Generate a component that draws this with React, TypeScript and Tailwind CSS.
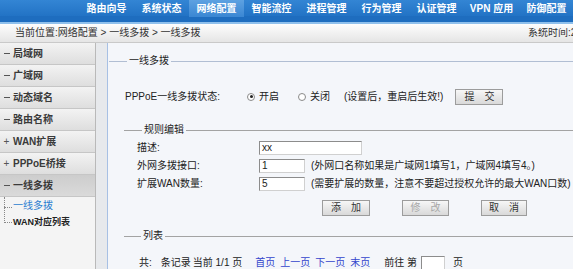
import React from 'react';

const nav = ['路由向导', '系统状态', '网络配置', '智能流控', '进程管理', '行为管理', '认证管理', 'VPN 应用', '防御配置'];

const menu = [
  { sign: '-', label: '局域网' },
  { sign: '-', label: '广域网' },
  { sign: '-', label: '动态域名' },
  { sign: '-', label: '路由名称' },
  { sign: '+', label: 'WAN扩展' },
  { sign: '+', label: 'PPPoE桥接' },
  { sign: '-', label: '一线多拨', active: true },
];

function Legend({ title, indent, lead, color }: { title: string; indent: number; lead: number; color: string }) {
  return (
    <div className="flex items-center h-[12px]" style={{ marginLeft: indent }}>
      <div className="h-px" style={{ width: lead, background: color }} />
      <span className="px-[2px] text-[#222]">{title}</span>
      <div className="h-px flex-1" style={{ background: color }} />
    </div>
  );
}

function Btn({ children, disabled }: { children: React.ReactNode; disabled?: boolean }) {
  return (
    <button
      className={`h-[16px] border border-[#9c9c9c] bg-gradient-to-b from-[#f7f7f7] to-[#d9d9d9] text-[10px] leading-none ${
        disabled ? 'text-[#a8a8a8]' : 'text-[#333]'
      }`}
    >
      {children}
    </button>
  );
}

function Radio({ checked, label }: { checked?: boolean; label: string }) {
  return (
    <span className="flex items-center">
      <span className="w-[8px] h-[8px] rounded-full border border-[#8a8a8a] bg-white flex items-center justify-center">
        {checked && <span className="w-[3px] h-[3px] rounded-full bg-[#222]" />}
      </span>
      <span className="ml-[4px]">{label}</span>
    </span>
  );
}

function Input({ value, w }: { value: string; w: number }) {
  return (
    <div
      className="h-[14px] border border-[#8c8c8c] border-r-[#d0d0d0] border-b-[#d0d0d0] bg-white pl-[2px] leading-[12px] text-[10px]"
      style={{ width: w }}
    >
      {value}
    </div>
  );
}

export default function App() {
  return (
    <div className="w-full h-[269px] overflow-hidden bg-[#f4f6fa] text-[10px] text-[#222] font-['Liberation_Sans','Noto_Sans_CJK_SC',sans-serif] leading-none">
      {/* top nav */}
      <div className="h-[16px] bg-gradient-to-b from-[#3385d4] to-[#2273c5] flex pl-[79px]">
        {nav.map((n, i) => (
          <div
            key={n}
            className={`w-[55px] shrink-0 h-[17px] flex items-center justify-center font-bold text-white ${
              i === 2 ? 'bg-gradient-to-b from-[#5da1e1] to-[#3a87d3]' : ''
            }`}
          >
            {n}
          </div>
        ))}
      </div>
      <div className="h-[6px] bg-[#1e6dbf]" />
      <div className="h-[2px] bg-[#8fc0ec]" />

      {/* breadcrumb */}
      <div className="h-[19px] flex items-center bg-gradient-to-b from-[#fdfdfd] to-[#e5e5e5] border-b border-[#c9c9c9]">
        <div className="flex-1 pl-[15px] text-[#333]">当前位置:网络配置 &gt; 一线多拨 &gt; 一线多拨</div>
        <div className="w-[45px] overflow-hidden whitespace-nowrap text-[#333]">系统时间:2013-08-12</div>
      </div>

      <div className="flex h-[226px]">
        {/* sidebar */}
        <div className="w-[96px] shrink-0 bg-[#f4f4f4] border-r border-[#b9b9b9] flex flex-col">
          {menu.map((m) => (
            <div
              key={m.label}
              className={`h-[22px] shrink-0 flex items-center border-b border-[#c6c6c6] font-bold text-[#3a3a3a] ${
                m.active ? 'bg-gradient-to-b from-[#cdcdcd] to-[#dadada]' : 'bg-gradient-to-b from-[#f3f3f3] to-[#dedede]'
              }`}
            >
              <span className="w-[13px] flex items-center justify-center text-[#555] font-normal">
                {m.sign === '-' ? <span className="block w-[6px] h-px bg-[#555]" /> : '+'}
              </span>
              <span>{m.label}</span>
            </div>
          ))}
          <div className="relative pl-[13px] pt-[4px] flex flex-col gap-[7px]">
            <div className="absolute left-[4px] top-0 h-[26px] border-l border-dotted border-[#888]" />
            <div className="absolute left-[4px] top-[10px] w-[8px] border-t border-dotted border-[#888]" />
            <div className="absolute left-[4px] top-[25px] w-[8px] border-t border-dotted border-[#888]" />
            <span className="text-[#2b7dd0]">一线多拨</span>
            <span className="text-[#222] font-bold text-[9px]">WAN对应列表</span>
          </div>
        </div>
        <div className="w-[12px] shrink-0 bg-[#e7e9ec] border-r border-[#a7c0e4]" />

        {/* main */}
        <div className="flex-1 pl-[1px] pt-[12px]">
          <Legend title="一线多拨" indent={0} lead={18} color="#b1bed3" />

          <div className="mt-[21px] h-[17px] flex items-center pl-[16px]">
            <span className="w-[122px]">PPPoE一线多拨状态:</span>
            <Radio checked label="开启" />
            <span className="ml-[19px]">
              <Radio label="关闭" />
            </span>
            <span className="ml-[14px]">(设置后，重启后生效!)</span>
            <span className="ml-[12px]">
              <Btn>
                <span className="px-[8px]">提　交</span>
              </Btn>
            </span>
          </div>

          <div className="mt-[19px]">
            <Legend title="规则编辑" indent={15} lead={18} color="#a3a3a3" />
          </div>

          <div className="mt-[3px] pl-[28px] flex flex-col">
            <div className="h-[18px] flex items-center">
              <span className="w-[122px]">描述:</span>
              <Input value="xx" w={103} />
            </div>
            <div className="h-[18px] flex items-center">
              <span className="w-[122px]">外网多拨接口:</span>
              <Input value="1" w={46} />
              <span className="ml-[6px] whitespace-nowrap">(外网口名称如果是广域网1填写1，广域网4填写4。)</span>
            </div>
            <div className="h-[18px] flex items-center">
              <span className="w-[122px]">扩展WAN数量:</span>
              <Input value="5" w={46} />
              <span className="ml-[6px] whitespace-nowrap">(需要扩展的数量，注意不要超过授权允许的最大WAN口数)</span>
            </div>
          </div>

          <div className="mt-[7px] pl-[213px] flex gap-[32px]">
            <div className="w-[48px] flex">
              <Btn>
                <span className="block w-[46px]">添　加</span>
              </Btn>
            </div>
            <div className="w-[47px] flex">
              <Btn disabled>
                <span className="block w-[45px]">修　改</span>
              </Btn>
            </div>
            <div className="w-[46px] flex">
              <Btn>
                <span className="block w-[44px]">取　消</span>
              </Btn>
            </div>
          </div>

          <div className="mt-[14px]">
            <Legend title="列表" indent={15} lead={17} color="#a3a3a3" />
          </div>

          <div className="mt-[14px] pl-[30px] h-[14px] flex items-center whitespace-nowrap">
            <span>共:</span>
            <span className="ml-[9px]">条记录</span>
            <span className="ml-[2px]">当前 1/1 页</span>
            <span className="ml-[13px] text-[#3344cc]">首页</span>
            <span className="ml-[5px] text-[#3344cc]">上一页</span>
            <span className="ml-[5px] text-[#3344cc]">下一页</span>
            <span className="ml-[5px] text-[#3344cc]">末页</span>
            <span className="ml-[14px]">前往 第</span>
            <span className="ml-[4px]">
              <Input value="" w={24} />
            </span>
            <span className="ml-[8px]">页</span>
          </div>
        </div>
      </div>
    </div>
  );
}
